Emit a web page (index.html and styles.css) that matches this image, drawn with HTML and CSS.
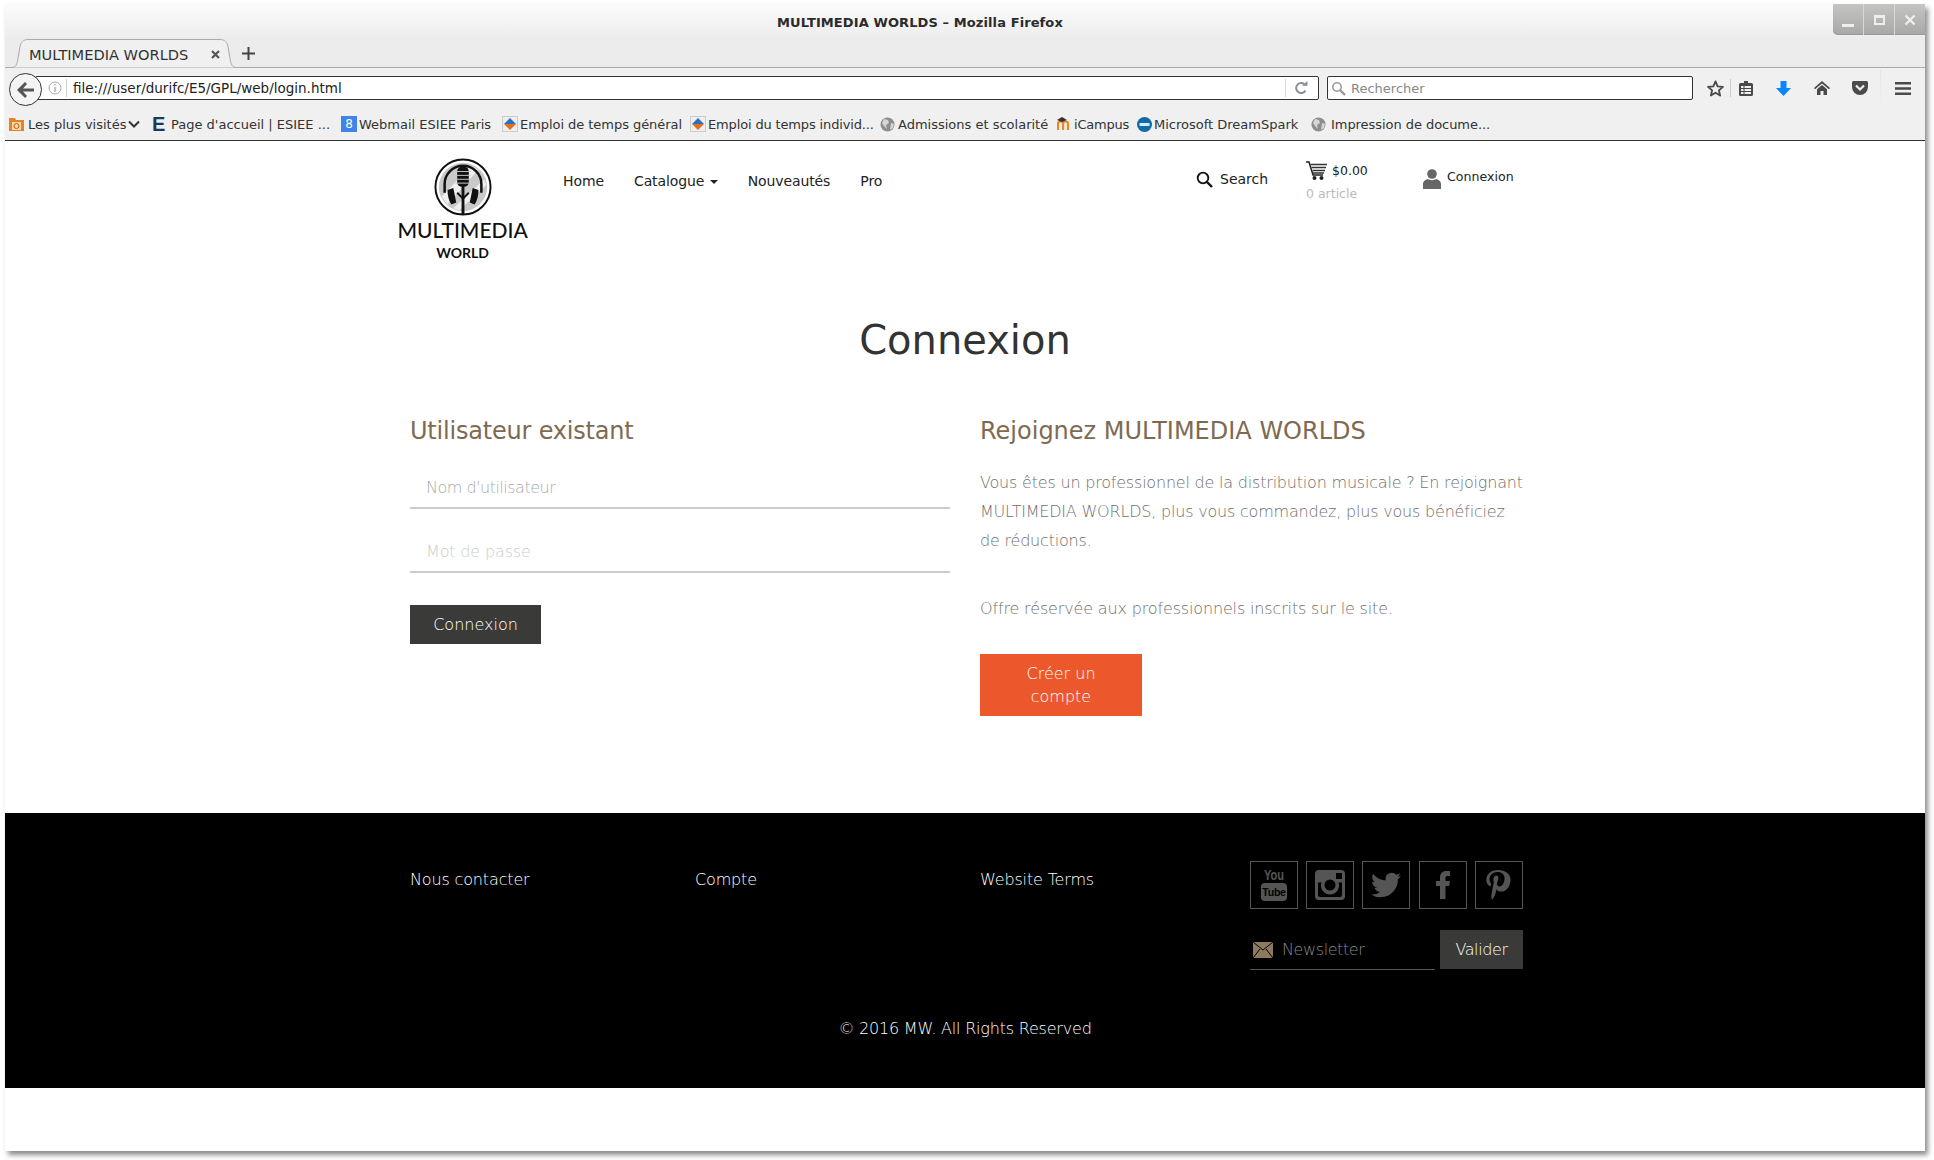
FILE: index.html
```html
<!DOCTYPE html>
<html lang="fr">
<head>
<meta charset="utf-8">
<title>MULTIMEDIA WORLDS</title>
<link rel="stylesheet" href="styles.css">
</head>
<body>
<div class="window">
  <div class="chrome-top">
    <div class="titlebar">
      <div class="title">MULTIMEDIA WORLDS – Mozilla Firefox</div>
      <div class="wm">
        <div class="wm-btn"><span class="wm-min"></span></div>
        <div class="wm-btn"><span class="wm-max"></span></div>
        <div class="wm-btn">
          <svg width="12" height="12" viewBox="0 0 12 12"><path d="M1.5 1.5l9 9M10.5 1.5l-9 9" stroke="#eee" stroke-width="2.4"/></svg>
        </div>
      </div>
    </div>
    <div class="tabstrip">
      <div class="tab">
        <svg class="tab-bg" width="236" height="29" viewBox="0 0 236 29"><path d="M0 28.5h5c5 0 6-3 7-9l2-12c1-4 3-7 8-7h192c5 0 7 3 8 7l2 12c1 6 2 9 7 9h5" fill="#f0f0f0" stroke="#a9a9a9"/></svg>
        <span class="tab-label">MULTIMEDIA WORLDS</span>
        <svg class="tab-close" width="9" height="9" viewBox="0 0 9 9"><path d="M1 1l7 7M8 1l-7 7" stroke="#555" stroke-width="2.2"/></svg>
      </div>
      <svg class="tab-new" width="13" height="13" viewBox="0 0 13 13"><path d="M6.5 0v13M0 6.5h13" stroke="#444" stroke-width="2"/></svg>
    </div>
  </div>
  <div class="toolbar">
    <div class="back">
      <svg width="20" height="18" viewBox="0 0 20 18"><path d="M9 1L1 9l8 8 2-2-4-4.500h11v-3H7l4-4.500z" fill="#555"/></svg>
    </div>
    <div class="urlbar">
      <svg class="info" width="14" height="14" viewBox="0 0 14 14"><circle cx="7" cy="7" r="6" fill="none" stroke="#aaa"/><path d="M7 6v5M7 3v1.600" stroke="#aaa" stroke-width="1.400"/></svg>
      <span class="url-sep"></span>
      <span class="url">file:///user/durifc/E5/GPL/web/login.html</span>
      <span class="url-sep2"></span>
      <svg class="reload" width="13" height="14" viewBox="0 0 13 14"><path d="M10.500 9.500A5 5 0 1 1 10 3.800" fill="none" stroke="#8a8f94" stroke-width="2"/><path d="M7 4.800h5.500V0z" fill="#8a8f94"/></svg>
    </div>
    <div class="searchbar">
      <svg width="15" height="15" viewBox="0 0 15 15"><circle cx="6" cy="6" r="4.200" fill="none" stroke="#999" stroke-width="1.600"/><path d="M9 9l5 5" stroke="#999" stroke-width="2.400"/></svg>
      <span class="search-ph">Rechercher</span>
    </div>
    <div class="tools">
      <svg class="t-star" width="17" height="17" viewBox="0 0 24 24"><path d="M12 2l3 7 7.500.7-5.700 5 1.700 7.300L12 18l-6.500 4 1.700-7.300-5.700-5L9 9z" fill="none" stroke="#4a4a4a" stroke-width="2.600" stroke-linejoin="round"/></svg>
      <span class="t-sep"></span>
      <svg class="t-list" width="14" height="15" viewBox="0 0 14 15"><path d="M5 0h4v2h3.500A1.500 1.500 0 0 1 14 3.500v10a1.500 1.500 0 0 1-1.500 1.500h-11A1.500 1.500 0 0 1 0 13.500v-10A1.500 1.500 0 0 1 1.500 2H5z" fill="#4a4a4a"/><path d="M2 5h10v2H2zM2 8h10v2H2zM2 11h10v2H2z" fill="#f0f0f0"/><path d="M5 4v10" stroke="#4a4a4a"/></svg>
      <svg class="t-dl" width="15" height="15" viewBox="0 0 15 15"><path d="M4.500 0h6v7H15l-7.500 8L0 7h4.500z" fill="#0a84ff"/></svg>
      <svg class="t-home" width="16" height="14" viewBox="0 0 16 14"><path d="M8 0l8 7-1 1.300L8 2.400 1 8.300 0 7z" fill="#4a4a4a"/><path d="M8 4l5 4.300V14H9.500V10h-3v4H3V8.300z" fill="#4a4a4a"/></svg>
      <svg class="t-pocket" width="16" height="14" viewBox="0 0 16 14"><path d="M1.500 0h13A1.500 1.500 0 0 1 16 1.500V6A8 8 0 0 1 0 6V1.500A1.500 1.500 0 0 1 1.500 0z" fill="#4a4a4a"/><path d="M4 4.500l4 4 4-4" fill="none" stroke="#f0f0f0" stroke-width="2.200"/></svg>
      <span class="t-sep2"></span>
      <svg class="t-menu" width="16" height="13" viewBox="0 0 16 13"><path d="M0 1.250h16M0 6.500h16M0 11.750h16" stroke="#4a4a4a" stroke-width="2.500"/></svg>
    </div>
  </div>
  <div class="bookmarks">
    <svg class="bk-i bk-folder" width="15" height="15" viewBox="0 0 15 15"><path d="M0 1h6l1 2h8v11H0z" fill="#e0852b"/><rect x="3" y="5" width="9" height="8" fill="#f6d9a8"/><circle cx="7.500" cy="9" r="2.500" fill="none" stroke="#c25c10"/></svg>
    <span class="bk bk-1">Les plus visités</span>
    <svg class="bk-chev" width="12" height="8" viewBox="0 0 12 8"><path d="M1 1.500l5 5 5-5" fill="none" stroke="#333" stroke-width="2"/></svg>
    <span class="bk-e">E</span>
    <span class="bk bk-2">Page d'accueil | ESIEE ...</span>
    <span class="bk-g">8</span>
    <span class="bk bk-3">Webmail ESIEE Paris</span>
    <svg class="bk-i bk-d1" width="16" height="16" viewBox="0 0 16 16"><rect x=".5" y=".5" width="15" height="15" fill="#eee" stroke="#ccc"/><path d="M8 2l6 6H2z" fill="#2a6fc0"/><path d="M2 8h12l-6 6z" fill="#e07020"/></svg>
    <span class="bk bk-4">Emploi de temps général</span>
    <svg class="bk-i bk-d2" width="16" height="16" viewBox="0 0 16 16"><rect x=".5" y=".5" width="15" height="15" fill="#eee" stroke="#ccc"/><path d="M8 2l6 6H2z" fill="#2a6fc0"/><path d="M2 8h12l-6 6z" fill="#e07020"/></svg>
    <span class="bk bk-5">Emploi du temps individ...</span>
    <svg class="bk-i bk-gl1" width="15" height="15" viewBox="0 0 15 15"><circle cx="7.500" cy="7.500" r="7" fill="#8d8d8d"/><path d="M4 2l4 1 1 3-3 2 1 4-3-3-2-3zM11 6l3 1-1 4-3 2z" fill="#d5d5d5"/></svg>
    <span class="bk bk-6">Admissions et scolarité</span>
    <svg class="bk-i bk-m" width="16" height="14" viewBox="0 0 16 14"><path d="M1 13V6.500C1 5 2 4.500 3.500 4.500S6 5 6 6.500V13M6 6.500C6 5 7 4.500 8.500 4.500S11 5 11 6.500V13" fill="none" stroke="#f0861e" stroke-width="2.200"/><path d="M0 3l5-3 5 3-5 2z" fill="#333"/></svg>
    <span class="bk bk-7">iCampus</span>
    <svg class="bk-i bk-oth" width="15" height="15" viewBox="0 0 15 15"><circle cx="7.500" cy="7.500" r="7.500" fill="#0f6aa8"/><rect x="2.500" y="6" width="10" height="3" fill="#d8ecf8"/></svg>
    <span class="bk bk-8">Microsoft DreamSpark</span>
    <svg class="bk-i bk-gl2" width="15" height="15" viewBox="0 0 15 15"><circle cx="7.500" cy="7.500" r="7" fill="#8d8d8d"/><path d="M4 2l4 1 1 3-3 2 1 4-3-3-2-3zM11 6l3 1-1 4-3 2z" fill="#d5d5d5"/></svg>
    <span class="bk bk-9">Impression de docume...</span>
  </div>

  <div class="page">
    <header class="site-head">
      <div class="logo">
        <svg width="58" height="58" viewBox="0 0 60 60">
          <circle cx="30" cy="30" r="28.500" fill="#fff" stroke="#111" stroke-width="2"/>
          <circle cx="30" cy="30" r="25" fill="#c9c9c9"/>
          <path d="M8 40L38 8l8 4L14 48zM20 52l32-30 2 6-28 26z" fill="#efefef"/>
          <path d="M11 36V27a19 19 0 0 1 38 0v9" fill="none" stroke="#111" stroke-width="2.600"/>
          <path d="M14 33l6-2 3 15-5 2c-3-4-4-10-4-15zM46 33l-6-2-3 15 5 2c3-4 4-10 4-15z" fill="#111"/>
          <rect x="24" y="9" width="12" height="21" rx="5" fill="#111"/>
          <path d="M22 14h16M22 18h16M22 22h16M22 26h16" stroke="#c9c9c9" stroke-width="1"/>
          <path d="M30 30v28" stroke="#111" stroke-width="3"/>
          <path d="M24 36l6 6 6-6" fill="none" stroke="#111" stroke-width="2"/>
        </svg>
        <div class="logo-main">MULTIMEDIA</div>
        <div class="logo-sub">WORLD</div>
      </div>
      <nav class="nav">
        <a class="nav-item">Home</a>
        <a class="nav-item">Catalogue <i class="caret"></i></a>
        <a class="nav-item">Nouveautés</a>
        <a class="nav-item">Pro</a>
      </nav>
      <div class="head-right">
        <div class="h-search">
          <svg width="17" height="17" viewBox="0 0 17 17"><circle cx="7" cy="7" r="5.300" fill="none" stroke="#111" stroke-width="1.800"/><path d="M11 11l5 5" stroke="#111" stroke-width="2.400"/></svg>
          <span>Search</span>
        </div>
        <div class="h-cart">
          <div class="h-cart-top">
            <svg width="21" height="19" viewBox="0 0 21 19"><path d="M0 1h3l4 13h10" fill="none" stroke="#222" stroke-width="1.500"/><path d="M4.500 3.500H21M5.500 6.500H20M6.500 9.500H19M7 12h11" stroke="#333" stroke-width="1.500"/><circle cx="8.500" cy="17" r="2" fill="#222"/><circle cx="15.500" cy="17" r="2" fill="#222"/></svg>
            <span>$0.00</span>
          </div>
          <div class="h-cart-count">0 article</div>
        </div>
        <div class="h-user">
          <svg width="18" height="20" viewBox="0 0 18 20"><circle cx="9" cy="5" r="4.800" fill="#666"/><path d="M0 20v-5c0-3 3-4.500 5-5 2 1.500 6 1.500 8 0 2 .5 5 2 5 5v5z" fill="#666"/></svg>
          <span>Connexion</span>
        </div>
      </div>
    </header>

    <main class="main">
      <h1 class="page-title">Connexion</h1>
      <div class="cols">
        <section class="col">
          <h2 class="sub sub-tight">Utilisateur existant</h2>
          <div class="field">Nom d'utilisateur</div>
          <div class="field field-pw">Mot de passe</div>
          <button class="btn-dark" type="button">Connexion</button>
        </section>
        <section class="col">
          <h2 class="sub">Rejoignez MULTIMEDIA WORLDS</h2>
          <p class="para para-1">Vous êtes un professionnel de la distribution musicale ? En rejoignant MULTIMEDIA WORLDS, plus vous commandez, plus vous bénéficiez de réductions.</p>
          <p class="para para-2">Offre réservée aux professionnels inscrits sur le site.</p>
          <button class="btn-orange" type="button">Créer un compte</button>
        </section>
      </div>
    </main>

    <footer class="foot">
      <div class="foot-row">
        <a class="foot-link">Nous contacter</a>
        <a class="foot-link">Compte</a>
        <a class="foot-link">Website Terms</a>
        <div class="foot-side">
          <div class="social">
            <div class="soc soc-yt">
              <span class="yt-you">You</span>
              <span class="yt-tube">Tube</span>
            </div>
            <div class="soc">
              <svg width="30" height="30" viewBox="0 0 30 30"><path fill-rule="evenodd" fill="#555" d="M4 0h22a4 4 0 0 1 4 4v22a4 4 0 0 1-4 4H4a4 4 0 0 1-4-4V4a4 4 0 0 1 4-4zM21 3v6h6V3zM3 12.500V25a2 2 0 0 0 2 2h20a2 2 0 0 0 2-2V12.500h-3.500a9 9 0 1 1-17 0zM15 9.500a5.500 5.500 0 1 0 0 11 5.500 5.500 0 0 0 0-11z"/></svg>
            </div>
            <div class="soc">
              <svg width="30" height="30" viewBox="0 0 24 24"><path fill="#555" d="M23.953 4.570a10 10 0 01-2.825.775 4.958 4.958 0 002.163-2.723c-.951.555-2.005.959-3.127 1.184a4.920 4.920 0 00-8.384 4.482C7.690 8.095 4.067 6.130 1.640 3.162a4.822 4.822 0 00-.666 2.475c0 1.710.870 3.213 2.188 4.096a4.904 4.904 0 01-2.228-.616v.060a4.923 4.923 0 003.946 4.827 4.996 4.996 0 01-2.212.085 4.936 4.936 0 004.604 3.417 9.867 9.867 0 01-6.102 2.105c-.390 0-.779-.023-1.170-.067a13.995 13.995 0 007.557 2.209c9.053 0 13.998-7.496 13.998-13.985 0-.210 0-.420-.015-.630A9.935 9.935 0 0024 4.590z"/></svg>
            </div>
            <div class="soc soc-f">
              <svg width="14" height="28" viewBox="0 0 14 28"><path fill="#555" d="M4 28V15H0v-5h4V6.500C4 2.500 6.500 0 10 0h4v5h-2.500C10 5 9.500 5.800 9.500 7v3H14l-.8 5H9.500v13z"/></svg>
            </div>
            <div class="soc">
              <svg width="28" height="30" viewBox="0 0 24 26"><path fill="#555" d="M12 0C5.500 0 2 4.200 2 8.500c0 2.300 1 4.700 3 5.500.5.200.7 0 .8-.5l.3-1.200c.1-.4 0-.6-.2-.9-.7-.8-1.100-1.700-1.100-3.100 0-3.700 2.800-6.500 7-6.500 3.700 0 6 2.300 6 5.300 0 4-1.800 7.100-4.400 7.100-1.400 0-2.500-1.200-2.100-2.600.4-1.700 1.200-3.600 1.200-4.800 0-1.100-.6-2-1.800-2-1.500 0-2.600 1.500-2.600 3.500 0 1.300.4 2.100.4 2.100L6.700 20c-.5 2-.1 5 0 5.500 0 .3.300.4.500.2.200-.3 2-2.800 2.700-5.100l1-3.900c.6 1.100 2.100 2 3.800 2 4.900 0 8.300-4.500 8.300-10.500C23 3.800 18.700 0 12 0z" transform="translate(-1 0)"/></svg>
            </div>
          </div>
          <div class="news">
            <div class="news-field">
              <svg width="20" height="16" viewBox="0 0 20 16"><rect width="20" height="16" fill="#8d7860"/><path d="M0 0l10 8 10-8M0 16l7-9M20 16l-7-9" fill="none" stroke="#000" stroke-width="1"/></svg>
              <span class="news-ph">Newsletter</span>
            </div>
            <button class="btn-valider" type="button">Valider</button>
          </div>
        </div>
      </div>
      <div class="copyright">© 2016 MW. All Rights Reserved</div>
    </footer>
  </div>
</div>
</body>
</html>
```
FILE: styles.css
```css
* { box-sizing: border-box; }
html, body { margin: 0; padding: 0; height: 100%; overflow: hidden; background: #fff; }
body { padding: 4px 0 0 5px; font-family: "DejaVu Sans", sans-serif; }
.window {
  width: 1920px; height: 1147px; background: #fff;
  box-shadow: 3px 4px 5px rgba(0,0,0,.45);
  display: flex; flex-direction: column; overflow: visible;
}
.chrome-top { height: 64px; background: linear-gradient(#fbfbfb 0, #ececec 36px, #ececec 100%); border-bottom: 1px solid #aaa; }
.titlebar { height: 35px; display: flex; position: relative; }
.title { position: absolute; left: 772px; top: 11px; font-size: 13px; font-weight: bold; letter-spacing: .1px; color: #2b2b2b; line-height: 15px; white-space: nowrap; }
.wm { position: absolute; right: 0; top: 0; display: flex; height: 31px; width: 92px; border-radius: 0 0 0 5px; background: linear-gradient(#c4c4c2, #a8a8a6); box-shadow: inset 0 -1px 0 #999; overflow: hidden; }
.wm-btn { flex: 1; display: flex; align-items: center; justify-content: center; border-left: 1px solid #d8d8d6; }
.wm-btn:first-child { border-left: 0; }
.wm-min { display: block; width: 12px; height: 3px; background: #eee; margin-top: 12px; }
.wm-max { display: block; width: 11px; height: 10px; border: 2px solid #eee; border-top-width: 3px; }
.tabstrip { height: 29px; display: flex; align-items: center; position: relative; }
.tab { position: relative; width: 236px; height: 29px; margin-left: 1px; display: flex; align-items: center; }
.tab-bg { position: absolute; left: 0; top: 0; }
.tab-label { position: relative; margin-left: 23px; padding-top: 2px; font-size: 14.600px; color: #333; white-space: nowrap; }
.tab-close { position: absolute; left: 205px; top: 11px; }
.tab-new { margin-left: 0; }
.toolbar { height: 40px; background: #f0f0f0; display: flex; align-items: flex-start; position: relative; padding-top: 8px; }
.back { position: absolute; left: 4px; top: 5px; width: 33px; height: 33px; border-radius: 50%; background: #f4f4f4; border: 1px solid #333; display: flex; align-items: center; justify-content: center; z-index: 2; }
.urlbar { margin-left: 30px; width: 1284px; height: 24px; background: #fff; border: 1px solid #333; border-radius: 2px; display: flex; align-items: center; padding-left: 12px; }
.info { flex: none; }
.url-sep { width: 1px; height: 18px; background: #ccc; margin: 0 6px 0 4px; }
.url { font-size: 13.500px; color: #222; }
.url-sep2 { width: 1px; height: 18px; background: #ddd; margin-left: auto; }
.reload { margin: 0 10px 0 9px; }
.searchbar { margin-left: 8px; width: 366px; height: 24px; background: #fff; border: 1px solid #333; border-radius: 2px; display: flex; align-items: center; padding-left: 3px; }
.search-ph { margin-left: 5px; font-size: 13px; color: #888; }
.tools { position: relative; flex: 1; display: flex; align-items: center; height: 24px; padding-left: 14px; }
.t-sep { width: 1px; height: 18px; background: #ccc; margin-left: 6px; }
.t-list { margin-left: 8px; }
.t-dl { margin-left: 23px; }
.t-home { margin-left: 23px; }
.t-pocket { margin-left: 22px; }
.t-sep2 { width: 1px; height: 36px; background: linear-gradient(#e4e4e4, #f0f0f0); margin-left: 12px; }
.t-menu { margin-left: 14px; }
.bookmarks { height: 33px; background: #f0f0f0; border-bottom: 1px solid #333; display: flex; align-items: center; padding-left: 4px; font-size: 13px; color: #333; white-space: nowrap; }
.bk { display: block; }
.bk-i { flex: none; }
.bk-1 { margin-left: 4px; width: 100px; }
.bk-chev { margin-left: 0; }
.bk-e { margin-left: 12px; width: 19px; font-family: "Liberation Sans", sans-serif; font-size: 20px; font-weight: bold; color: #1b3a5a; line-height: 20px; }
.bk-2 { margin-left: 0; width: 170px; }
.bk-g { width: 16px; height: 16px; background: #3f84ea; color: #fff; font-size: 12px; line-height: 16px; text-align: center; }
.bk-3 { margin-left: 2px; width: 143px; }
.bk-4 { margin-left: 2px; width: 170px; letter-spacing: -.05px; }
.bk-5 { margin-left: 2px; width: 172px; letter-spacing: -.15px; }
.bk-6 { margin-left: 3px; width: 159px; }
.bk-7 { margin-left: 1px; width: 63px; letter-spacing: -.2px; }
.bk-8 { margin-left: 2px; width: 157px; }
.bk-9 { margin-left: 5px; letter-spacing: -.05px; }
.page { flex: 1; display: flex; flex-direction: column; }
.site-head { width: 1140px; margin: 0 auto; height: 144px; display: flex; position: relative; }
.logo { width: 135px; margin-left: 0; margin-right: 3px; display: flex; flex-direction: column; align-items: center; padding-top: 17px; flex: none; }
.logo-main { font-family: "Lato", sans-serif; font-size: 21px; font-weight: 500; color: #111; line-height: 24px; margin-top: 2px; width: 130px; text-align: center; white-space: nowrap; }
.logo-sub { font-family: "Lato", sans-serif; font-size: 14px; font-weight: bold; color: #111; line-height: 18px; margin-top: 2px; }
.nav { display: flex; gap: 30px; margin-left: 30px; padding-top: 30px; font-size: 14px; letter-spacing: -.1px; color: #222; line-height: 20px; }
.nav-item { white-space: nowrap; }
.caret { display: inline-block; width: 0; height: 0; border-left: 4px solid transparent; border-right: 4px solid transparent; border-top: 4px solid #222; vertical-align: middle; margin-left: 1px; }
.head-right { margin-left: auto; display: flex; font-size: 14px; color: #222; }
.h-search { width: 110px; display: flex; align-items: center; gap: 7px; height: 20px; margin-top: 28px; }
.h-cart { width: 117px; padding-top: 20px; }
.h-cart-top { display: flex; align-items: center; gap: 5px; font-size: 12.500px; }
.h-cart-count { font-size: 12.500px; color: #bbb; margin-top: 6px; }
.h-user { display: flex; gap: 6px; padding-top: 28px; font-size: 12.600px; width: 112px; line-height: 16px; }
.h-user span { display: block; }
.main { flex: 1; width: 1140px; margin: 0 auto; }
.page-title { margin: 30px 0 0; text-align: center; font-size: 40px; font-weight: normal; line-height: 50px; color: #333; }
.cols { display: flex; margin-top: 51px; }
.col { width: 570px; padding: 0 15px; }
.sub { margin: 0; font-size: 24px; font-weight: normal; line-height: 30px; color: #7e6a52; }
.sub-tight { letter-spacing: -.2px; }
.field { height: 41px; border-bottom: 2px solid #ccc; margin-top: 22px; padding: 10px 16px 0; font-size: 16px; font-weight: 200; line-height: 20px; letter-spacing: -.5px; color: #aaa; }
.field-pw { margin-top: 23px; letter-spacing: -.15px; color: #ccc; }
.btn-dark { margin-top: 32px; display: block; width: 131px; height: 39px; border: 0; background: #3a3a38; color: #fff; font: 200 16px "DejaVu Sans", sans-serif; }
.para { margin: 22px 0 0; font-size: 16px; font-weight: 200; line-height: 29px; letter-spacing: -.15px; color: #707070; }
.para-1 { margin-right: -12px; padding-right: 4px; letter-spacing: -.2px; }
.para-2 { margin-top: 39px; }
.btn-orange { margin-top: 31px; display: block; width: 162px; height: 62px; border: 0; padding: 0 30px; background: #ec582c; color: #fff; font: 200 16px/23px "DejaVu Sans", sans-serif; }
.foot { height: 275px; background: #000; color: #fff; flex: none; margin-bottom: 63px; }
.foot-row { width: 1110px; margin: 0 auto; padding-top: 48px; display: flex; height: 157px; }
.foot-link { width: 285px; padding-top: 9px; font-size: 16px; font-weight: 200; line-height: 20px; letter-spacing: -.15px; color: #fff; flex: none; }
.foot-link:nth-child(3) { width: 270px; }
.foot-side { width: 273px; flex: none; }
.social { display: flex; gap: 8px; }
.soc { width: 48px; height: 48px; border: 1px solid #555; display: flex; align-items: center; justify-content: center; flex: none; }
.soc-f { margin-left: 1px; }
.soc-yt { flex-direction: column; gap: 0; }
.yt-you { font: bold 11px/13px "Liberation Sans", sans-serif; color: #555; transform: scaleY(1.25); }
.yt-tube { width: 26px; height: 18px; margin-top: 1px; border-radius: 4px; background: #555; color: #000; font: bold 10.500px/18px "Liberation Sans", sans-serif; text-align: center; letter-spacing: -.2px; }
.news { display: flex; margin-top: 21px; }
.news-field { width: 185px; height: 40px; border-bottom: 1px solid #555; display: flex; align-items: center; padding-left: 3px; }
.news-ph { margin-left: 9px; font-size: 16px; font-weight: 200; letter-spacing: -.4px; color: #888; }
.btn-valider { margin-left: 5px; width: 83px; height: 39px; border: 0; background: #3a3a38; color: #fff; font: 200 16px "DejaVu Sans", sans-serif; letter-spacing: -.4px; }
.copyright { text-align: center; font-size: 16px; font-weight: 200; line-height: 20px; letter-spacing: -.2px; margin-top: 49px; }
```
